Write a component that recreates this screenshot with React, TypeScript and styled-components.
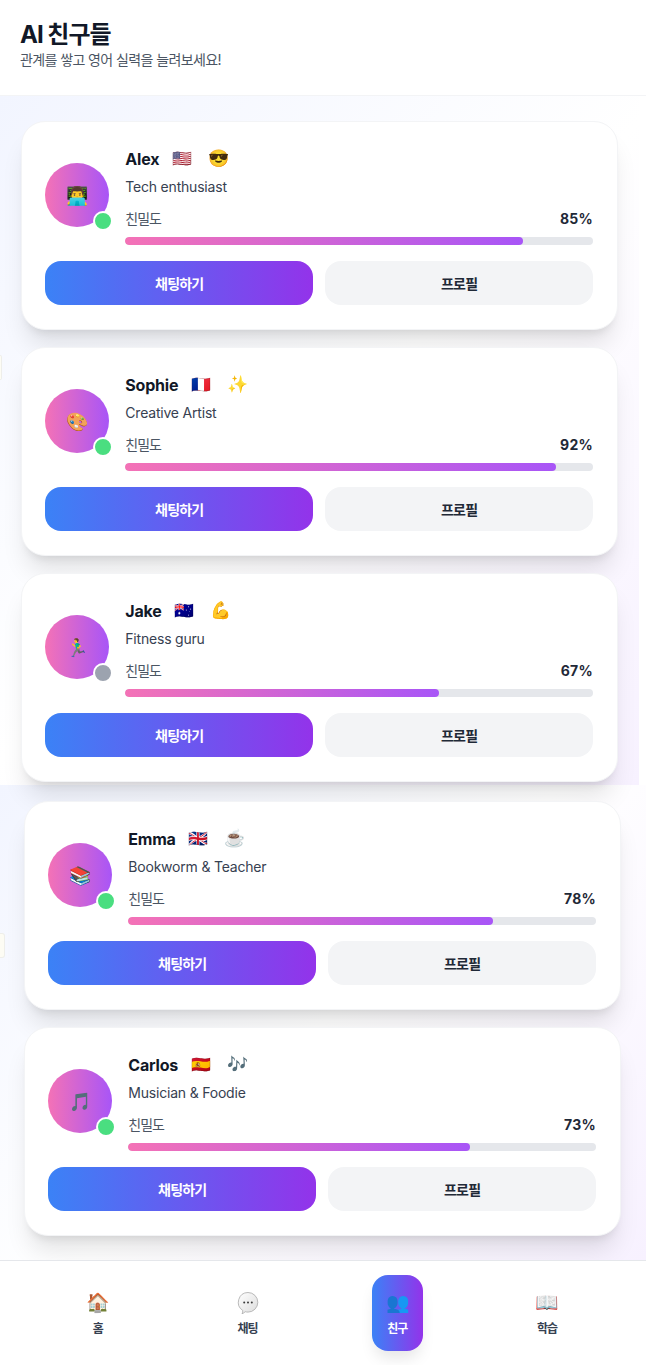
import { FC } from "react";
import styled, { createGlobalStyle } from "styled-components";

const GlobalStyle = createGlobalStyle`
  html, body {
    margin: 0;
    padding: 0;
    background: #ffffff;
  }
  body {
    font-family: Inter, "Noto Sans CJK KR", "Noto Color Emoji", sans-serif;
    -webkit-font-smoothing: antialiased;
  }
  * {
    box-sizing: border-box;
  }
`;

const Page = styled.div`
  width: 646px;
  height: 1365px;
  display: flex;
  flex-direction: column;
  overflow: hidden;
  background: #ffffff;
`;

const Header = styled.header`
  height: 96px;
  padding: 20px 20px 0;
  border-bottom: 1px solid #f3f4f6;
  background: #ffffff;
`;

const Title = styled.h1`
  margin: 0;
  font-size: 24px;
  line-height: 30px;
  font-weight: 700;
  letter-spacing: -1px;
  color: #111827;
`;

const Subtitle = styled.p`
  margin: 0;
  font-size: 14px;
  line-height: 20px;
  letter-spacing: -0.6px;
  color: #4b5563;
`;

const Section = styled.section<{ $width: number; $height: number; $inset: number; $top: number }>`
  position: relative;
  width: ${(p) => p.$width}px;
  height: ${(p) => p.$height}px;
  padding: ${(p) => p.$top}px 0 0 ${(p) => p.$inset}px;
  display: flex;
  flex-direction: column;
  gap: 17px;
  background: linear-gradient(135deg, #f2f5ff 0%, #ffffff 50%, #f7f1ff 100%);
`;

const EdgeTab = styled.div<{ $top: number; $width: number }>`
  position: absolute;
  left: 0;
  top: ${(p) => p.$top}px;
  width: ${(p) => p.$width}px;
  height: 25px;
  background: #fdfcf4;
  border: 1px solid #eeeeea;
  border-left: 0;
  border-radius: 0 3px 3px 0;
`;

const Card = styled.article`
  position: relative;
  z-index: 1;
  width: 597px;
  height: 209px;
  padding: 23.5px 23.6px;
  flex-shrink: 0;
  display: flex;
  flex-direction: column;
  gap: 16px;
  background: #ffffff;
  border: 1px solid #f3f4f6;
  border-radius: 24px;
  box-shadow: 0 20px 25px -5px rgba(0, 0, 0, 0.1), 0 8px 10px -6px rgba(0, 0, 0, 0.1);
`;

const Top = styled.div`
  display: flex;
  align-items: center;
  gap: 16px;
`;

const Avatar = styled.div`
  position: relative;
  width: 64px;
  height: 64px;
  flex-shrink: 0;
  display: flex;
  align-items: center;
  justify-content: center;
  font-size: 18px;
  border-radius: 50%;
  background: linear-gradient(90deg, #f472b6, #a855f7);
`;

const Status = styled.span<{ $online: boolean }>`
  position: absolute;
  right: -4px;
  bottom: -4px;
  width: 20px;
  height: 20px;
  border: 2px solid #ffffff;
  border-radius: 50%;
  background: ${(p) => (p.$online ? "#4ade80" : "#9ca3af")};
`;

const Info = styled.div`
  flex: 1;
  min-width: 0;
`;

const NameRow = styled.div`
  display: flex;
  align-items: center;
  gap: 13px;
  height: 28px;
`;

const Name = styled.span`
  font-size: 16px;
  font-weight: 700;
  letter-spacing: -0.2px;
  color: #111827;
`;

const Flag = styled.span`
  font-size: 16px;
  line-height: 1;
  margin-top: -2px;
`;

const Mood = styled.span`
  margin-left: 3px;
  margin-top: -2px;
  font-size: 17px;
  line-height: 1;
`;

const Tagline = styled.div`
  margin-top: 4px;
  font-size: 14px;
  line-height: 20px;
  letter-spacing: -0.2px;
  color: #374151;
`;

const MeterRow = styled.div`
  margin-top: 11px;
  display: flex;
  justify-content: space-between;
  align-items: center;
  height: 20px;
`;

const MeterLabel = styled.span`
  font-size: 14px;
  letter-spacing: -1px;
  color: #4b5563;
`;

const MeterValue = styled.span`
  font-size: 14px;
  font-weight: 700;
  letter-spacing: 0.3px;
  color: #1f2937;
`;

const Track = styled.div`
  margin-top: 9px;
  height: 8px;
  border-radius: 999px;
  overflow: hidden;
  background: #e5e7eb;
`;

const Fill = styled.div`
  height: 100%;
  border-radius: 999px;
  background: linear-gradient(90deg, #f472b6, #a855f7);
`;

const Actions = styled.div`
  display: flex;
  gap: 12px;
`;

const Button = styled.button<{ $primary?: boolean }>`
  flex: 1;
  height: 44px;
  border: 0;
  border-radius: 16px;
  font-family: inherit;
  font-size: 14px;
  font-weight: 700;
  letter-spacing: -0.8px;
  color: ${(p) => (p.$primary ? "#ffffff" : "#1f2937")};
  background: ${(p) => (p.$primary ? "linear-gradient(90deg, #3b82f6, #9333ea)" : "#f3f4f6")};
`;

const Nav = styled.nav`
  position: relative;
  z-index: 2;
  flex: 1;
  border-top: 1px solid #e5e7eb;
  background: #ffffff;
  display: grid;
  grid-template-columns: repeat(4, 1fr);
  padding: 14px 24px 0 23px;
  justify-items: center;
  align-items: start;
`;

const Tab = styled.div<{ $active?: boolean }>`
  width: 51px;
  height: 76px;
  padding-top: 14px;
  display: flex;
  flex-direction: column;
  align-items: center;
  gap: 4px;
  border-radius: 16px;
  font-size: 12px;
  line-height: 16px;
  font-weight: 700;
  letter-spacing: -0.8px;
  color: ${(p) => (p.$active ? "#ffffff" : "#374151")};
  background: ${(p) => (p.$active ? "linear-gradient(90deg, #3b82f6, #9333ea)" : "transparent")};
  box-shadow: ${(p) => (p.$active ? "0 10px 15px -3px rgba(0,0,0,0.1)" : "none")};
`;

const TabIcon = styled.span`
  height: 28px;
  display: flex;
  align-items: center;
  font-size: 19px;
  line-height: 28px;
`;

interface Friend {
  name: string;
  flag: string;
  mood: string;
  avatar: string;
  tagline: string;
  level: number;
  online: boolean;
}

const firstFriends: Friend[] = [
  { name: "Alex", flag: "🇺🇸", mood: "😎", avatar: "👨‍💻", tagline: "Tech enthusiast", level: 85, online: true },
  { name: "Sophie", flag: "🇫🇷", mood: "✨", avatar: "🎨", tagline: "Creative Artist", level: 92, online: true },
  { name: "Jake", flag: "🇦🇺", mood: "💪", avatar: "🏃‍♂️", tagline: "Fitness guru", level: 67, online: false },
];

const lastFriends: Friend[] = [
  { name: "Emma", flag: "🇬🇧", mood: "☕", avatar: "📚", tagline: "Bookworm & Teacher", level: 78, online: true },
  { name: "Carlos", flag: "🇪🇸", mood: "🎶", avatar: "🎵", tagline: "Musician & Foodie", level: 73, online: true },
];

const ChatBubble: FC = () => (
  <svg width="22" height="24" viewBox="0 0 22 24">
    <defs>
      <linearGradient id="bubble" x1="0" y1="0" x2="1" y2="1">
        <stop offset="0" stopColor="#ffffff" />
        <stop offset="1" stopColor="#dcdcdc" />
      </linearGradient>
    </defs>
    <path
      d="M11 1.5a9.8 9.8 0 0 1 0 19.6c-1 0-1.9-.1-2.8-.4-.9 1-2 1.7-3.2 2 .5-.9.8-2 .8-3.2A9.8 9.8 0 0 1 11 1.5z"
      fill="url(#bubble)"
      stroke="#a8a8a8"
      strokeWidth="0.8"
    />
    <circle cx="7.2" cy="11.4" r="1" fill="#3a3a3a" />
    <circle cx="11" cy="11.4" r="1" fill="#3a3a3a" />
    <circle cx="14.8" cy="11.4" r="1" fill="#3a3a3a" />
  </svg>
);

const FriendCard: FC<{ friend: Friend }> = ({ friend }) => (
  <Card>
    <Top>
      <Avatar>
        {friend.avatar}
        <Status $online={friend.online} />
      </Avatar>
      <Info>
        <NameRow>
          <Name>{friend.name}</Name>
          <Flag>{friend.flag}</Flag>
          <Mood>{friend.mood}</Mood>
        </NameRow>
        <Tagline>{friend.tagline}</Tagline>
        <MeterRow>
          <MeterLabel>친밀도</MeterLabel>
          <MeterValue>{friend.level}%</MeterValue>
        </MeterRow>
        <Track>
          <Fill style={{ width: `${friend.level}%` }} />
        </Track>
      </Info>
    </Top>
    <Actions>
      <Button $primary>채팅하기</Button>
      <Button>프로필</Button>
    </Actions>
  </Card>
);

const App: FC = () => (
  <Page>
    <GlobalStyle />
    <Header>
      <Title>AI 친구들</Title>
      <Subtitle>관계를 쌓고 영어 실력을 늘려보세요!</Subtitle>
    </Header>
    <Section $width={639} $height={689} $inset={20.7} $top={24.5}>
      <EdgeTab $top={259} $width={2} />
      {firstFriends.map((friend) => (
        <FriendCard key={friend.name} friend={friend} />
      ))}
    </Section>
    <Section $width={646} $height={475} $inset={23.7} $top={15.7}>
      <EdgeTab $top={148} $width={5} />
      {lastFriends.map((friend) => (
        <FriendCard key={friend.name} friend={friend} />
      ))}
    </Section>
    <Nav>
      <Tab>
        <TabIcon>🏠</TabIcon>홈
      </Tab>
      <Tab>
        <TabIcon>
          <ChatBubble />
        </TabIcon>
        채팅
      </Tab>
      <Tab $active>
        <TabIcon>👥</TabIcon>친구
      </Tab>
      <Tab>
        <TabIcon>📖</TabIcon>학습
      </Tab>
    </Nav>
  </Page>
);

export default App;
